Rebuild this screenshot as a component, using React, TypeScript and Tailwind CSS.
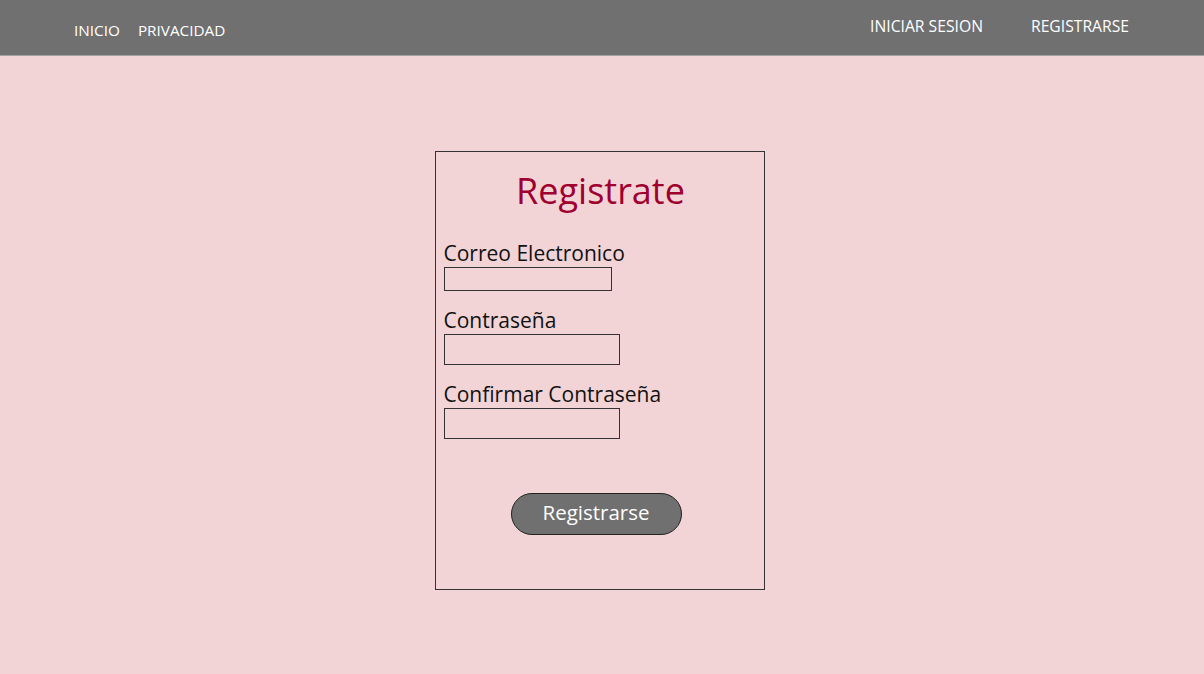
import React from "react";

export default function App() {
  const font = { fontFamily: '"Open Sans", "Noto Sans", sans-serif' };
  return (
    <div className="w-[1204px] h-[674px] bg-[#f2d4d6] overflow-hidden" style={font}>
      <header className="h-[56px] bg-[#707070] border-b border-[#a3a3a3] flex items-start text-white">
        <nav className="flex gap-[18px] pl-[74px] pt-[19px] text-[15.3px]">
          <span>INICIO</span>
          <span>PRIVACIDAD</span>
        </nav>
        <nav className="ml-auto flex gap-[48px] pr-[75px] pt-[15px] text-[15.7px]">
          <span>INICIAR SESION</span>
          <span>REGISTRARSE</span>
        </nav>
      </header>
      <main className="flex justify-center pr-[5px] pt-[95px]">
        <div className="w-[330px] h-[439px] border border-[#333333] flex flex-col px-[8px]">
          <h1 className="text-center text-[#a0002f] text-[36px] leading-none mt-[21px] pl-[2px]">Registrate</h1>
          <label className="text-[21px] leading-none text-[#111] mt-[34px]">Correo Electronico</label>
          <div className="w-[168px] h-[24px] border border-[#333] mt-[3px]" />
          <label className="text-[21px] leading-none text-[#111] mt-[19px]">Contraseña</label>
          <div className="w-[176px] h-[31px] border border-[#333] mt-[3px]" />
          <label className="text-[21px] leading-none text-[#111] mt-[19px]">Confirmar Contraseña</label>
          <div className="w-[176px] h-[31px] border border-[#333] mt-[3px]" />
          <div className="flex justify-center mt-[54px] pr-[7px]">
            <button className="w-[171px] h-[42px] rounded-full bg-[#707070] border border-[#222] text-white text-[20.5px] leading-none pb-[3px]">
              Registrarse
            </button>
          </div>
        </div>
      </main>
    </div>
  );
}
